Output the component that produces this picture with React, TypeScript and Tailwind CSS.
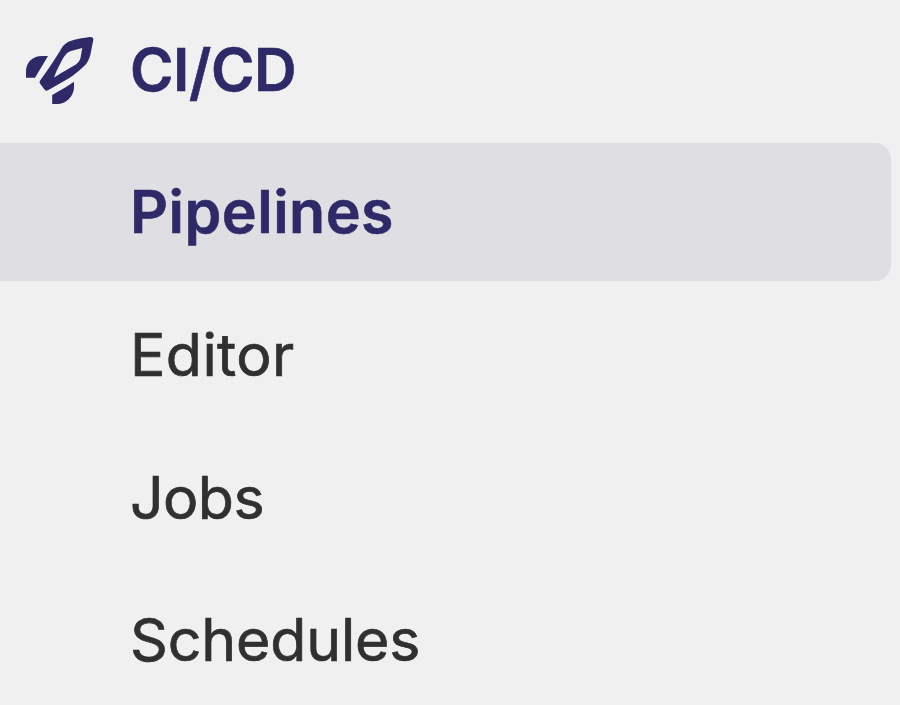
const items = [
  { label: 'Editor', style: 'pt-[4px] tracking-[0.4px]' },
  { label: 'Jobs', style: 'pt-[4px] tracking-[-0.6px]' },
  { label: 'Schedules', style: 'pt-[2px] tracking-[-0.15px]' },
];

function Rocket() {
  return (
    <svg className="mb-px ml-[25px] h-[68px] w-[70px] shrink-0" viewBox="25 37 70 68" fill="#2e2a68">
      <path fillRule="evenodd" d="M90 37C92.5 37 93.5 38 93.3 40L90.5 54C89 60 87 64 82 68C78 71.5 74 75 68.5 78.5L48 90.3C46.5 91 45.5 90.8 44.5 89.5L40 83.5C39.3 82.5 39.5 81.5 40.2 80.5L50 66.5L60 51C62.5 46 65 43.5 69 41.5C76 39 84 37.7 90 37ZM82.3 48L71 51C67.5 52 66 54 63.5 57.5C60.5 63 57 69 54 77.6C57 76 60 73.7 63 72L75 65C79.5 62 80.5 59.5 81 55Z" />
      <path d="M26 77.8V72C26 66 28.5 61 33 58.5C37 55.8 42 56 48 56L42 66L35 77.8Z" />
      <path d="M52.2 104V95L66 87L74 81.8V88C73.5 94 70 99 65 102C61.5 104 57 104.2 52.2 104Z" />
    </svg>
  );
}

export default function App() {
  return (
    <nav className="h-[705px] w-[900px] overflow-hidden bg-[#f0f0f0] font-['Inter',sans-serif] text-[59px] leading-[72px] text-[#303030]">
      <div className="flex h-[143px] items-center text-[#2e2a68]">
        <Rocket />
        <span className="ml-[35px] pb-[4px] font-semibold tracking-[-0.4px] [-webkit-text-stroke:0.6px_#2e2a68]">
          CI<span className="inline-block origin-top scale-y-[1.05]">/</span>CD
        </span>
      </div>
      <div className="flex h-[138px] w-[891px] items-center rounded-r-[16px] bg-[#dfdee3] pl-[130px] font-semibold tracking-[0.5px] text-[#2e2a68] [-webkit-text-stroke:0.6px_#2e2a68]">Pipelines</div>
      {items.map((item) => (
        <div key={item.label} className={`flex h-[143px] items-center pl-[130px] font-normal [-webkit-text-stroke:0.7px_#303030] ${item.style}`}>{item.label}</div>
      ))}
    </nav>
  );
}
